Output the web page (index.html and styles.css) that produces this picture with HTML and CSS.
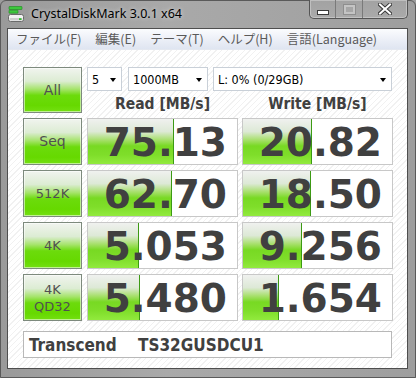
FILE: index.html
```html
<!DOCTYPE html>
<html lang="ja">
<head>
<meta charset="utf-8">
<title>CrystalDiskMark 3.0.1 x64</title>
<link rel="stylesheet" href="styles.css">
</head>
<body>
<div class="window">
  <div class="titlebar">
    <svg class="app-icon" width="16" height="16" viewBox="0 0 16 16">
      <rect x="1" y="0.5" width="13" height="3" rx="0.5" fill="#3cc83c" stroke="#1f8a1f" stroke-width="0.6"/>
      <rect x="1" y="4.2" width="9" height="3" rx="0.5" fill="#3cc83c" stroke="#1f8a1f" stroke-width="0.6"/>
      <rect x="0.5" y="8.5" width="15" height="7" rx="2" fill="#f2f2f2" stroke="#6a6a6a" stroke-width="1"/>
      <rect x="1.5" y="12" width="13" height="2.6" rx="1" fill="#cfcfcf"/>
      <rect x="11" y="12.2" width="2.5" height="1.8" fill="#2fbf2f"/>
    </svg>
    <span class="title">CrystalDiskMark 3.0.1 x64</span>
    <div class="caption">
      <div class="cbtn min"><span class="min-bar"></span></div>
      <div class="cbtn max"><span class="max-box"></span></div>
      <div class="cbtn close">
        <svg width="14" height="12" viewBox="0 0 14 12">
          <path d="M2 1.5 L12 10.5 M12 1.5 L2 10.5" stroke="#3a3a3a" stroke-width="4" stroke-linecap="square"/>
          <path d="M2 1.5 L12 10.5 M12 1.5 L2 10.5" stroke="#ffffff" stroke-width="2" stroke-linecap="square"/>
        </svg>
      </div>
    </div>
  </div>
  <div class="client">
    <div class="menubar">
      <span class="menu-item">ファイル(F)</span>
      <span class="menu-item">編集(E)</span>
      <span class="menu-item">テーマ(T)</span>
      <span class="menu-item">ヘルプ(H)</span>
      <span class="menu-item">言語(Language)</span>
    </div>
    <div class="content">
      <div class="grid">
        <div class="gbtn all">All</div>
        <div class="selects">
          <div class="select s-count"><span>5</span><i class="arrow"></i></div>
          <div class="select s-size"><span>1000MB</span><i class="arrow"></i></div>
          <div class="select s-drive"><span>L: 0% (0/29GB)</span><i class="arrow"></i></div>
        </div>
        <div class="head">Read [MB/s]</div>
        <div class="head">Write [MB/s]</div>

        <div class="gbtn">Seq</div>
        <div class="val"><div class="bar" style="width:86px"></div><span class="num">75.13</span></div>
        <div class="val"><div class="bar" style="width:69px"></div><span class="num">20.82</span></div>

        <div class="gbtn small">512K</div>
        <div class="val"><div class="bar" style="width:84px"></div><span class="num">62.70</span></div>
        <div class="val"><div class="bar" style="width:68px"></div><span class="num">18.50</span></div>

        <div class="gbtn small">4K</div>
        <div class="val"><div class="bar" style="width:51px"></div><span class="num">5.053</span></div>
        <div class="val"><div class="bar" style="width:59px"></div><span class="num">9.256</span></div>

        <div class="gbtn small two">4K<br>QD32</div>
        <div class="val"><div class="bar" style="width:52px"></div><span class="num">5.480</span></div>
        <div class="val"><div class="bar" style="width:36px"></div><span class="num">1.654</span></div>
      </div>
      <div class="comment">Transcend    TS32GUSDCU1</div>
    </div>
  </div>
</div>
</body>
</html>
```

FILE: styles.css
```css
* { box-sizing: border-box; }
html, body { margin: 0; padding: 0; }
body {
  width: 416px;
  height: 378px;
  overflow: hidden;
  background: #9c9c9c;
}
.window {
  width: 416px;
  height: 378px;
  border: 1px solid #5a5a5a;
  border-radius: 6px 6px 0 0;
  background: linear-gradient(to right, #9a9a9a, #a9a9a9 40%, #a4a4a4 70%, #9e9e9e);
  padding: 0 7px 8px 6px;
  display: flex;
  flex-direction: column;
}
.titlebar {
  height: 27px;
  flex: none;
  display: flex;
  align-items: flex-start;
}
.app-icon {
  margin: 5px 0 0 1px;
  flex: none;
}
.title {
  margin: 5px 0 0 7px;
  font-family: "Noto Sans", "DejaVu Sans", sans-serif;
  font-size: 12.5px;
  line-height: 16px;
  color: #000;
  text-shadow: 0 0 4px rgba(255,255,255,0.7);
}
.caption {
  margin-left: auto;
  margin-top: -1px;
  display: flex;
  height: 19px;
  border: 1px solid #555;
  border-top: none;
  border-radius: 0 0 5px 5px;
  overflow: hidden;
  box-shadow: inset 0 0 0 1px rgba(255,255,255,0.3);
  background: linear-gradient(#a2a2a2, #aaaaaa);
}
.cbtn {
  height: 100%;
  display: flex;
  align-items: center;
  justify-content: center;
}
.cbtn.min { width: 26px; border-right: 1px solid #7a7a7a; }
.cbtn.max { width: 27px; border-right: 1px solid #7a7a7a; }
.cbtn.close { width: 44px; }
.min-bar {
  display: block;
  width: 12px;
  height: 5px;
  margin-top: 6px;
  background: #fff;
  border: 1px solid #3a3a3a;
}
.max-box {
  display: block;
  width: 11px;
  height: 9px;
  border: 2px solid #c4c4c4;
  outline: 1px solid #8e8e8e;
}
.client {
  flex: 1;
  border: 1px solid #4e4e4e;
  background: #fff;
  display: flex;
  flex-direction: column;
  min-height: 0;
}
.menubar {
  height: 21px;
  flex: none;
  display: flex;
  align-items: center;
  padding-left: 8px;
  gap: 14px;
  background: linear-gradient(#fbfcfe, #eef1f8 45%, #dfe5f1);
  border-bottom: 1px solid #e4e8f0;
  font-family: "Noto Sans CJK JP", "Noto Sans", sans-serif;
  font-size: 12.5px;
  line-height: 16px;
  color: #5a5a5a;
}
.content {
  flex: 1;
  padding: 17px 0 0 15px;
  background: repeating-linear-gradient(135deg, #ffffff 0 3px, #f1f1f1 3px 4px);
}
.grid {
  display: grid;
  grid-template-columns: 60px 151px 151px;
  grid-template-rows: 24px 17px 47px 47px 47px 47px;
  column-gap: 4px;
  row-gap: 5px;
}
.gbtn {
  width: 59px;
  border: 1px solid #7d8a7d;
  box-shadow: inset 0 0 0 1px rgba(255,255,255,0.55);
  background: linear-gradient(#f1f4ef 0%, #dcecd3 30%, #a6e46c 48%, #6cdb0c 62%, #66d900 85%, #74e012 100%);
  display: flex;
  align-items: center;
  justify-content: center;
  text-align: center;
  font-family: "DejaVu Sans", sans-serif;
  font-size: 14px;
  color: #505050;
  line-height: 17px;
}
.gbtn.small { font-size: 13px; }
.all { grid-row: 1 / span 2; }
.selects {
  grid-column: 2 / span 2;
  display: flex;
  gap: 6px;
}
.select {
  height: 24px;
  border: 1px solid #c9d0d8;
  background: #fff;
  display: flex;
  align-items: center;
  justify-content: space-between;
  padding: 0 5px 0 4px;
  font-family: "DejaVu Sans Condensed", "DejaVu Sans", sans-serif;
  font-size: 12.5px;
  color: #000;
}
.s-count { width: 35px; }
.s-size { width: 80px; }
.s-drive { flex: 1; margin-left: -1px; margin-right: 1px; }
.arrow {
  display: block;
  width: 0;
  height: 0;
  border-left: 3.5px solid transparent;
  border-right: 3.5px solid transparent;
  border-top: 4px solid #000;
  margin-top: 1px;
}
.head {
  font-family: "DejaVu Sans Condensed", "DejaVu Sans", sans-serif;
  font-weight: bold;
  font-size: 15.5px;
  line-height: 17px;
  color: #404040;
  text-align: center;
}
.val {
  position: relative;
  border: 1px solid #c8c8c8;
  background: #fff;
  display: flex;
  align-items: center;
  justify-content: flex-end;
  padding-right: 10px;
}
.bar {
  position: absolute;
  left: 0;
  top: 0;
  bottom: 0;
  background: linear-gradient(#f0f1ef 0%, #dde9d6 28%, #a9e06f 46%, #78d923 60%, #7fde2a 80%, #92ea3e 100%);
  border-right: 1px solid #3c9a14;
}
.num {
  position: relative;
  font-family: "DejaVu Sans", sans-serif;
  font-weight: bold;
  font-size: 39px;
  line-height: 40px;
  color: #404040;
  margin-top: 2px;
}
.comment {
  margin-top: 10px;
  width: 369px;
  height: 27px;
  border: 1px solid #b8b8b8;
  background: #fff;
  padding-left: 5px;
  display: flex;
  align-items: center;
  white-space: pre;
  font-family: "DejaVu Sans Condensed", "DejaVu Sans", sans-serif;
  font-weight: bold;
  font-size: 17px;
  color: #404040;
}
```
